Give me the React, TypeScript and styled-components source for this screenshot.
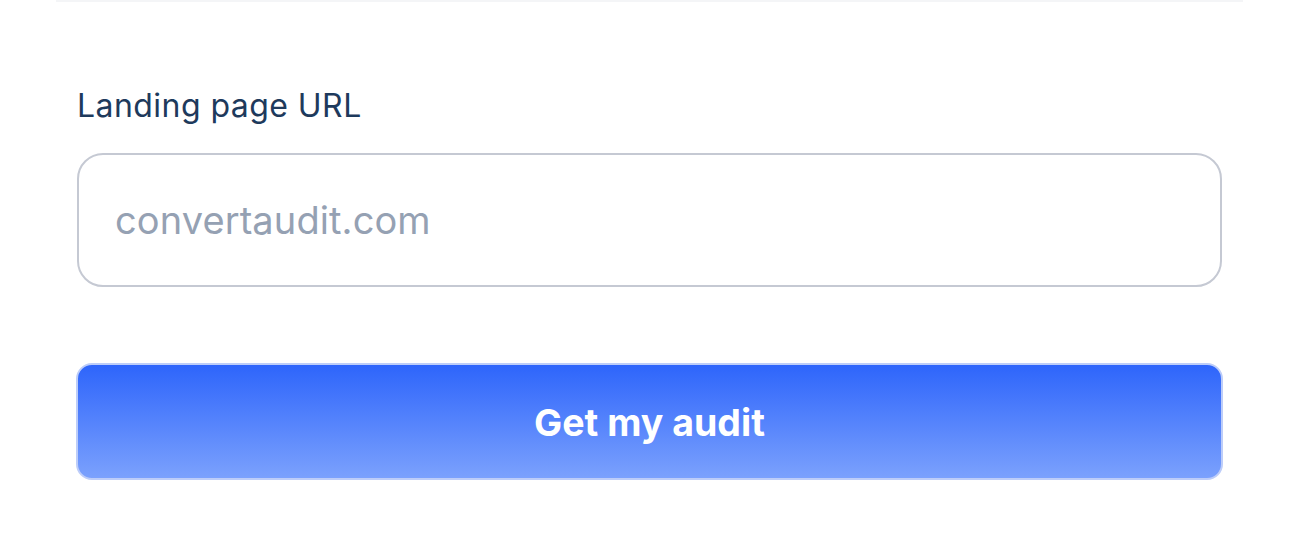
import React from "react";
import styled, { createGlobalStyle } from "styled-components";

const Global = createGlobalStyle`
  html, body { margin: 0; padding: 0; background: #ffffff; }
  body { font-family: Inter, "Noto Sans", sans-serif; }
`;

const Page = styled.div`
  width: 1299px;
  height: 557px;
  background: #fff;
  overflow: hidden;
`;

const TopRule = styled.div`
  height: 2px;
  margin: 0 56px;
  background: #f4f5f7;
`;

const Form = styled.form`
  display: flex;
  flex-direction: column;
  padding: 84px 77px 0 76px;
`;

const Label = styled.label`
  font-size: 32px;
  line-height: 40px;
  font-weight: 400;
  color: #1e3a5c;
  margin-left: 1px;
  letter-spacing: 0.45px;
`;

const Input = styled.input`
  box-sizing: border-box;
  margin-top: 27px;
  margin-left: 1px;
  width: 1145px;
  height: 134px;
  border: 2px solid #c5c9d3;
  border-radius: 26px;
  padding: 0 36px;
  font-family: Inter, "Noto Sans", sans-serif;
  font-size: 38px;
  letter-spacing: 0.1px;
  color: #1e3a5c;
  outline: none;
  background: #fff;
  &::placeholder { color: #95a1b3; }
`;

const Button = styled.button`
  box-sizing: border-box;
  margin-top: 76px;
  width: 1147px;
  height: 117px;
  padding: 2px 0 0;
  border: 2px solid #bdcdf9;
  border-radius: 16px;
  background: linear-gradient(180deg, #2e65fb 0%, #7ba1fd 100%);
  color: #ffffff;
  font-family: Inter, "Noto Sans", sans-serif;
  font-size: 37.5px;
  font-weight: 700;
  cursor: pointer;
`;

export default function App() {
  return (
    <Page>
      <Global />
      <TopRule />
      <Form onSubmit={(e) => e.preventDefault()}>
        <Label htmlFor="url">Landing page URL</Label>
        <Input id="url" placeholder="convertaudit.com" />
        <Button type="submit">Get my audit</Button>
      </Form>
    </Page>
  );
}
